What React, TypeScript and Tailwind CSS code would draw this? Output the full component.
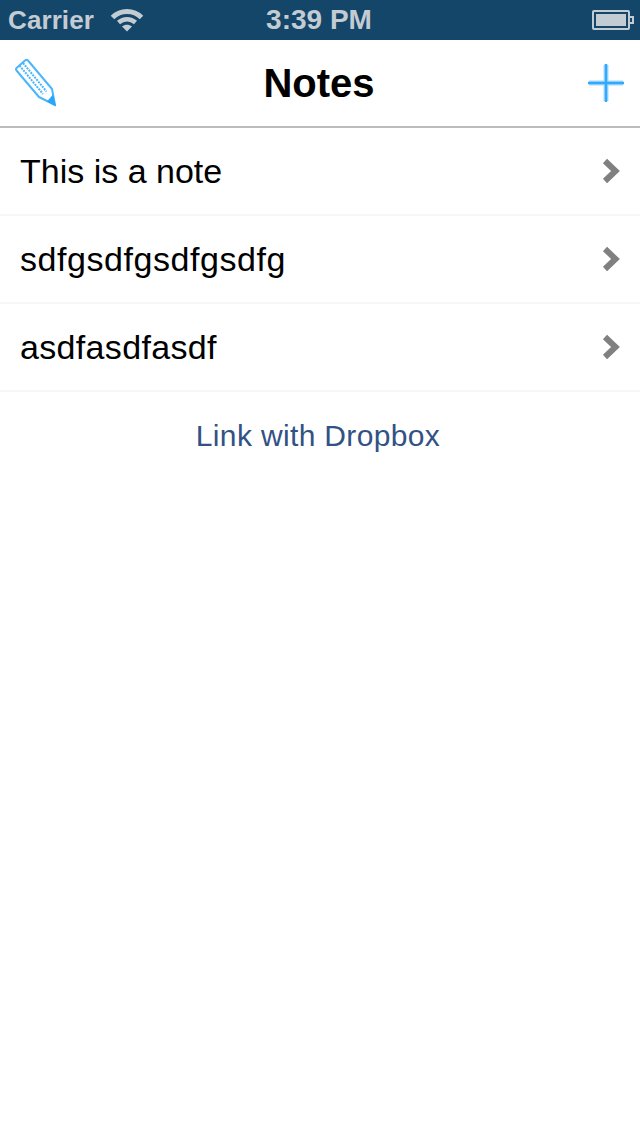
import React from "react";

const notes = [
    { text: "This is a note", className: "" },
    { text: "sdfgsdfgsdfgsdfg", className: "tracking-[0.56px]" },
    { text: "asdfasdfasdf", className: "tracking-[0.33px]" },
];

const Wifi = () => (
    <svg width="34" height="24" viewBox="0 0 34 24" fill="none" stroke="#c3ccd3">
        <path d="M2.500 9.500C10.500 1.500 23.500 1.500 31.500 9.500" strokeWidth="5" />
        <path d="M8.500 14.500C13.500 10 20.500 10 25.500 14.500" strokeWidth="4.500" />
        <path d="M17 23.500L12 18.500C15 16 19 16 22 18.500Z" fill="#c3ccd3" stroke="none" />
    </svg>
);

const Battery = () => (
    <div className="flex items-center">
        <div className="w-[38px] h-[20px] border-2 border-[#c3ccd3] rounded-[2px] p-[2px]">
            <div className="w-full h-full bg-[#c3ccd3]" />
        </div>
        <div className="w-[4px] h-[8px] border-2 border-l-0 border-[#c3ccd3]" />
    </div>
);

const Pencil = () => (
    <svg width="44" height="50" viewBox="0 0 44 50" fill="none">
        <g stroke="#4db5fb" strokeWidth="2" strokeLinejoin="round">
            <path d="M10 2.500C11 1.700 12.300 1.700 13 2.500L37 31L40 47L24 39L1.500 12.500C0.900 11.700 1 10.500 1.800 9.800Z" />
            <path d="M4.500 7.500L28 36" strokeDasharray="2 1" />
            <path d="M8 5L31.500 33.500" strokeDasharray="2 1" />
        </g>
        <path d="M32 43.500L38 36.500L41 48.500Z" fill="#29a6fb" />
    </svg>
);

const Plus = () => (
    <svg width="36" height="38" viewBox="0 0 36 38" fill="none">
        <g stroke="#a8dbff" strokeWidth="5">
            <path d="M18 1V37" />
            <path d="M1 19H35" />
        </g>
        <g stroke="#33a8fd" strokeWidth="2.500">
            <path d="M18 0V38" />
            <path d="M0 19H36" />
        </g>
    </svg>
);

const Chevron = () => (
    <svg width="19" height="26" viewBox="0 0 19 26" fill="none" stroke="#808080" strokeWidth="6">
        <path d="M4 3L14.500 13L4 23" />
    </svg>
);

const App: React.FC = () => {
    return (
        <div className="w-[640px] h-[1136px] bg-white font-['Liberation_Sans',Arial,sans-serif]">
            <div className="h-[40px] bg-[#14466a] flex items-center justify-between pl-[8px] pr-[6px] text-[#c3ccd3] font-bold relative">
                <div className="flex items-center gap-[16px] text-[26px] tracking-[0.1px]">
                    <span>Carrier</span>
                    <Wifi />
                </div>
                <span className="absolute left-0 right-[2px] text-center text-[28px]">3:39 PM</span>
                <Battery />
            </div>
            <div className="h-[88px] grid grid-cols-[1fr_auto_1fr] items-center pl-[15px] pr-[16px] border-b-2 border-[#bcbcbc]">
                <Pencil />
                <span className="text-[40px] font-bold text-black -ml-[1px]">Notes</span>
                <div className="flex justify-end">
                    <Plus />
                </div>
            </div>
            {notes.map((note) => (
                <div
                    key={note.text}
                    className="h-[88px] flex items-center justify-between pl-[20px] pr-[20px] border-b-2 border-[#f7f7f7] text-[34px] text-black"
                >
                    <span className={note.className}>{note.text}</span>
                    <Chevron />
                </div>
            ))}
            <div className="h-[88px] flex items-center justify-center pr-[4px] pb-[2px] text-[30px] tracking-[0.35px] text-[#325285]">
                Link with Dropbox
            </div>
        </div>
    );
};

export default App;
